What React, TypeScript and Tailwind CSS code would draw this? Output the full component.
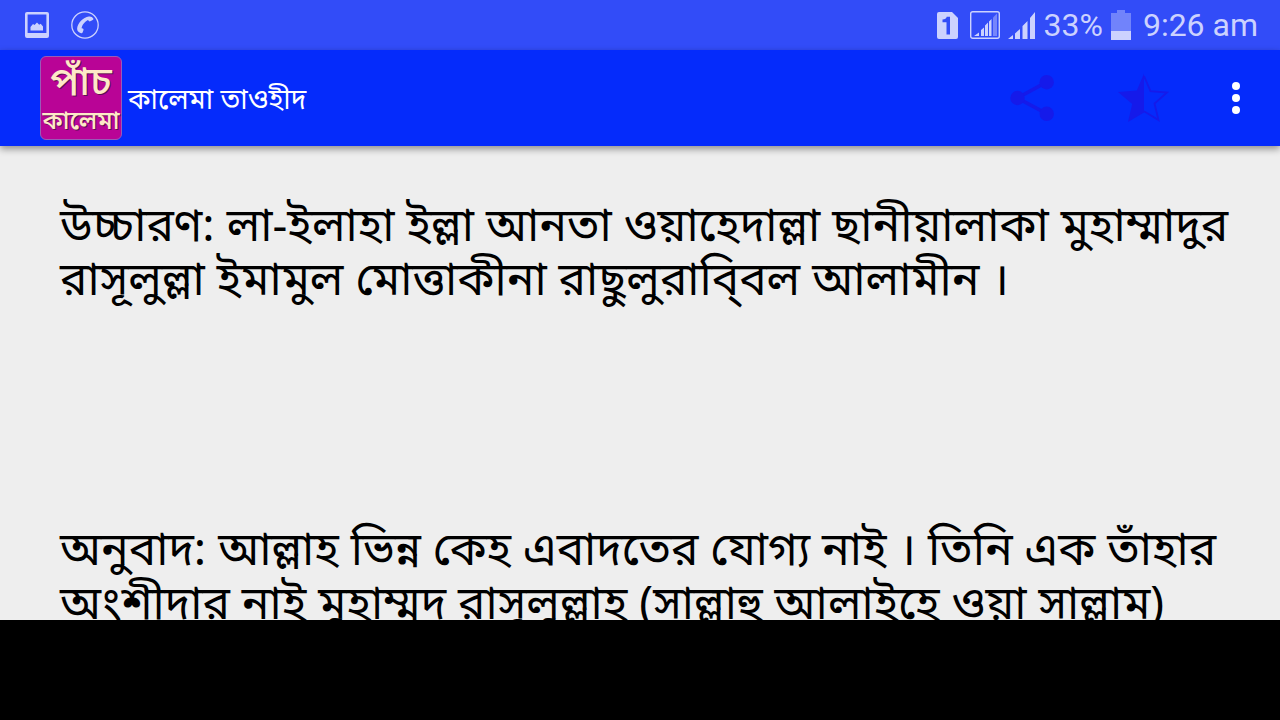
import React from "react";

const BENGALI = "font-['Noto_Sans','Noto_Sans_Bengali',sans-serif]";

function PictureIcon() {
  return (
    <svg width="24" height="26" viewBox="0 0 24 26" aria-hidden="true">
      <path fill="#ccd2fe" fillRule="evenodd" d="M2 0h20a2 2 0 0 1 2 2v22a2 2 0 0 1-2 2H2a2 2 0 0 1-2-2V2a2 2 0 0 1 2-2zM2.600 2.600v18.400h18.800V2.600z" />
      <path fill="#ccd2fe" d="M5.500 18.500v-3.500l2.500-3 1.500 1 2.500-2.600 2.200 2.300 1.500-1 2.300 2.800v4z" />
    </svg>
  );
}

function PhoneIcon() {
  return (
    <svg width="28" height="28" viewBox="0 0 28 28" aria-hidden="true">
      <circle cx="14" cy="14" r="13.200" fill="none" stroke="#ccd2fe" strokeWidth="1.300" />
      <path d="M17.800 5.600c1.800-.6 3.600.4 4.500 1.900.3.700 0 1.300-.6 1.600l-2.400 1.200c-.6.3-1.200 0-1.600-.5l-.8-.8c-3 1.500-5.800 5-6.300 8.200l1.200.4c.6.300.9.900.7 1.500l-.9 2.500c-.3.700-.9.900-1.500.7-2.300-.8-4.200-2.100-4-4.700.5-5.500 6-11 11.700-12z" fill="#ccd2fe" />
    </svg>
  );
}

function SimIcon() {
  return (
    <svg width="21" height="27" viewBox="0 0 21 27" aria-hidden="true">
      <path d="M2 0h13l6 6v19a2 2 0 0 1-2 2H2a2 2 0 0 1-2-2V2a2 2 0 0 1 2-2z" fill="#ccd2fe" />
      <path d="M5.500 7.500c2.500 0 3.800-1 4.200-2.700h3.300V22.500H9.500V10.200h-4z" fill="#324cf8" />
    </svg>
  );
}

function BoxedSignalIcon() {
  return (
    <svg width="30" height="28" viewBox="0 0 30 28" aria-hidden="true">
      <rect x=".7" y=".7" width="28.600" height="26.600" rx="2" fill="none" stroke="#ccd2fe" strokeWidth="1.400" />
      <path d="M4 25l5-3.500v3.500zM11 19l3-2.500V25h-3zM15 14.500l3-3V25h-3zM19 10.500l2.500-2.500v17H19z" fill="#ccd2fe" />
      <path d="M23 6.500L27 2.500V25h-4z" fill="#7685fb" />
    </svg>
  );
}

function SignalIcon() {
  return (
    <svg width="27" height="27" viewBox="0 0 27 27" aria-hidden="true">
      <path d="M0 27l5-4v4zM7 21.500l5-4.500V27H7zM14.500 14l5-5v18h-5zM22 6l5-6v27h-5z" fill="#ccd2fe" />
    </svg>
  );
}

function BatteryIcon() {
  return (
    <svg width="20" height="30" viewBox="0 0 20 30" aria-hidden="true">
      <path d="M6 0h8v3h6v18H0V3h6z" fill="#7183fb" />
      <path d="M0 21h20v9H0z" fill="#ccd2fe" />
    </svg>
  );
}

function ShareIcon() {
  return (
    <svg width="44" height="48" viewBox="0 0 44 48" aria-hidden="true">
      <path d="M36.500 8.200L7.500 24l29 15.700" fill="none" stroke="#151aea" strokeWidth="3.600" />
      <circle cx="36.700" cy="8.200" r="7.200" fill="#151aea" />
      <circle cx="7.500" cy="24" r="7.200" fill="#151aea" />
      <circle cx="36.700" cy="39.800" r="7.200" fill="#151aea" />
    </svg>
  );
}

function HalfStarIcon() {
  return (
    <svg width="52" height="50" viewBox="0 0 52 50" aria-hidden="true">
      <path d="M26 .5L18.800 17.500 0 19l14.200 12L10 49 26 39.500z" fill="#151aea" />
      <path d="M26 3l6.500 15.200L49 19.500 36.500 30.500 40.500 47 26 38.300" fill="none" stroke="#151aea" strokeWidth="1.800" />
    </svg>
  );
}

function MoreIcon() {
  return (
    <svg width="8" height="32" viewBox="0 0 8 32" aria-hidden="true">
      <circle cx="4" cy="4" r="4" fill="#fff" />
      <circle cx="4" cy="16" r="4" fill="#fff" />
      <circle cx="4" cy="28" r="4" fill="#fff" />
    </svg>
  );
}

function AppLogo() {
  return (
    <div className="flex h-[84px] w-[82px] flex-col items-center justify-center rounded-md border border-[#9a5ab8] bg-[#b90496] font-medium text-[#fde9c8] [text-shadow:1px_1px_0_#5c1050]">
      <span className="text-[40px] leading-[42px]">পাঁচ</span>
      <span className="text-[25px] leading-9">কালেমা</span>
    </div>
  );
}

export default function App() {
  return (
    <div className={`flex h-screen flex-col overflow-hidden bg-[#eeeeee] ${BENGALI}`}>
      <div className="flex h-[50px] shrink-0 items-center justify-between bg-[#324cf8] pl-[25px] pr-[22px] font-[Roboto,sans-serif] text-[32px] text-[#ccd2fe]">
        <div className="flex items-center gap-[22px]">
          <PictureIcon />
          <PhoneIcon />
        </div>
        <div className="flex items-center">
          <div className="flex items-center gap-2">
            <SimIcon />
            <span className="pl-1"><BoxedSignalIcon /></span>
            <SignalIcon />
            <span>33%</span>
            <BatteryIcon />
          </div>
          <time className="pl-3">9:26 am</time>
        </div>
      </div>

      <header className="z-10 flex h-24 shrink-0 items-center justify-between bg-[#052bfb] pl-10 pr-10 shadow-[0_3px_7px_rgba(0,0,0,0.4)]">
        <div className="flex items-center gap-1.5">
          <AppLogo />
          <h1 className="text-[28px] leading-9 text-white">কালেমা তাওহীদ</h1>
        </div>
        <div className="flex items-center">
          <button type="button" aria-label="Share" className="mr-16"><ShareIcon /></button>
          <button type="button" aria-label="Favourite" className="mr-[62px]"><HalfStarIcon /></button>
          <button type="button" aria-label="More options"><MoreIcon /></button>
        </div>
      </header>

      <main className="min-h-0 flex-1 overflow-hidden pl-[60px] pr-10 pt-[50px] text-[46px] leading-[54px] text-black">
        <p className="mb-[216px]">
          উচ্চারণ: লা-ইলাহা ইল্লা আনতা ওয়াহেদাল্লা ছানীয়ালাকা মুহাম্মাদুর রাসূলুল্লা ইমামুল মোত্তাকীনা রাছুলুরাবি্বল আলামীন ।
        </p>
        <p>
          অনুবাদ: আল্লাহ ভিন্ন কেহ এবাদতের যোগ্য নাই । তিনি এক তাঁহার অংশীদার নাই মুহাম্মদ রাসূলুল্লাহ (সাল্লাহু আলাইহে ওয়া সাল্লাম)
        </p>
      </main>

      <footer className="h-[100px] shrink-0 bg-black" />
    </div>
  );
}
